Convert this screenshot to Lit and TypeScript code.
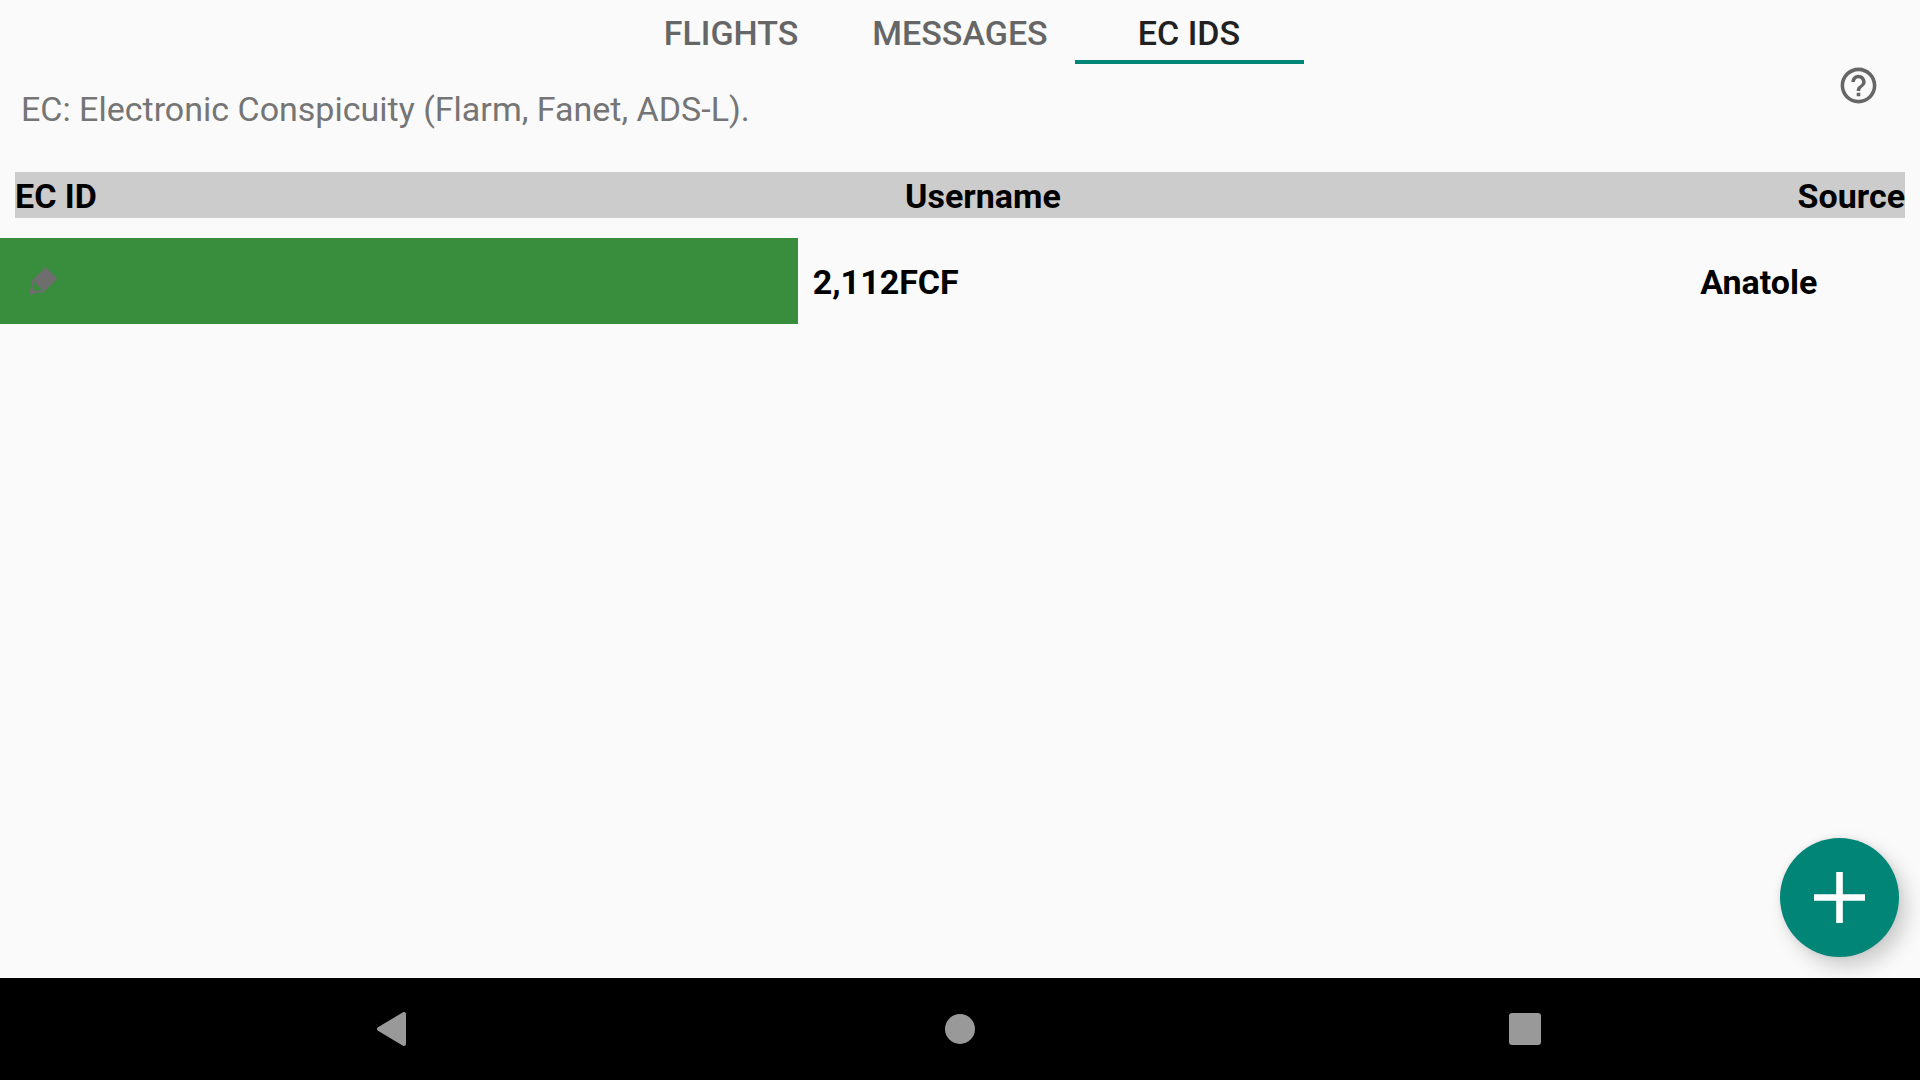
import { LitElement, html, css } from "lit";
import { customElement, state } from "lit/decorators.js";

interface EcEntry {
  id: string;
  username: string;
}

@customElement("app-root")
export class AppRoot extends LitElement {
  static styles = css`
    :host {
      display: flex;
      flex-direction: column;
      min-height: 100vh;
      background: #fafafa;
      color: #000;
      font-family: Roboto, "Liberation Sans", sans-serif;
      font-size: 34px;
      line-height: 40px;
    }
    button {
      border: 0;
      padding: 0;
      background: none;
      font: inherit;
      color: inherit;
    }
    svg {
      display: block;
    }
    .tabs {
      display: flex;
      justify-content: center;
    }
    .tab {
      width: 229px;
      height: 64px;
      padding-top: 6px;
      border-bottom: 4px solid transparent;
      box-sizing: border-box;
      font-weight: 500;
      color: #666;
    }
    .tab.active {
      color: #212121;
      border-color: #008577;
    }
    .intro {
      display: flex;
      justify-content: space-between;
      height: 108px;
      padding: 0 40px 0 21px;
      box-sizing: border-box;
    }
    .intro p {
      margin: 0;
      padding-top: 25px;
      color: #757575;
    }
    .help {
      align-self: flex-start;
      color: #666;
    }
    .list,
    .list thead,
    .list tbody {
      display: block;
    }
    .list tr {
      display: grid;
      align-items: center;
      white-space: nowrap;
    }
    .list th,
    .list td {
      padding: 2px 0 0;
      font-weight: 700;
      text-align: left;
    }
    .list thead tr {
      grid-template-columns: 89fr 89fr 11fr;
      height: 46px;
      margin: 0 15px 20px;
      background: #ccc;
    }
    .list th.end {
      text-align: right;
    }
    .list tbody tr {
      grid-template-columns: 831fr 940fr 229fr;
      height: 86px;
    }
    .list td.mark {
      display: flex;
      align-items: center;
      align-self: stretch;
      padding: 0 0 0 28px;
      background: #388e3c;
      color: #6e6e6e;
    }
    .list td.id {
      padding-left: 15px;
    }
    .spacer {
      flex: 1;
    }
    .actions {
      display: flex;
      justify-content: flex-end;
      padding: 0 21px 21px 0;
    }
    .fab {
      display: grid;
      place-items: center;
      width: 119px;
      height: 119px;
      border-radius: 50%;
      background: #008577;
      color: #fff;
      box-shadow: 8px 10px 20px rgba(0, 0, 0, 0.18), 0 0 6px rgba(0, 0, 0, 0.08);
    }
    .system {
      position: relative;
      display: grid;
      grid-template-columns: 1fr auto 1fr;
      align-items: center;
      justify-items: center;
      height: 102px;
      background: #000;
      color: #999;
    }
    .system .back {
      justify-self: end;
      margin-right: 538px;
    }
    .system .recent {
      justify-self: start;
      margin-left: 534px;
    }
  `;

  @state() private tab = "EC IDS";

  private tabs = ["FLIGHTS", "MESSAGES", "EC IDS"];
  private entries: EcEntry[] = [{ id: "2,112FCF", username: "Anatole" }];

  render() {
    return html`
      <nav class="tabs" role="tablist">
        ${this.tabs.map(
          (name) => html`<button
            class="tab ${name === this.tab ? "active" : ""}"
            role="tab"
            aria-selected=${name === this.tab}
            @click=${() => (this.tab = name)}
          >${name}</button>`
        )}
      </nav>
      <section class="intro">
        <p>EC: Electronic Conspicuity (Flarm, Fanet, ADS-L).</p>
        <button class="help" aria-label="Help">
          <svg width="43" height="43" viewBox="0 0 24 24" fill="currentColor">
            <path d="M11 18h2v-2h-2v2zm1-16C6.480 2 2 6.480 2 12s4.480 10 10 10 10-4.480 10-10S17.520 2 12 2zm0 18c-4.410 0-8-3.590-8-8s3.590-8 8-8 8 3.590 8 8-3.590 8-8 8zm0-14c-2.210 0-4 1.790-4 4h2c0-1.100.9-2 2-2s2 .9 2 2c0 2-3 1.750-3 5h2c0-2.250 3-2.500 3-5 0-2.210-1.790-4-4-4z" />
          </svg>
        </button>
      </section>
      <table class="list">
        <thead>
          <tr>
            <th scope="col">EC ID</th>
            <th scope="col">Username</th>
            <th scope="col" class="end">Source</th>
          </tr>
        </thead>
        <tbody>
          ${this.entries.map(
            (entry) => html`<tr>
              <td class="mark">
                <button aria-label="Edit">
                  <svg width="30" height="30" viewBox="0 0 30 30" fill="currentColor" fill-rule="evenodd">
                    <path d="M17.700 1L29.400 12.400L16 25.700L1.200 28.800L4.300 14.300ZM5.800 15.800L4.600 21.500Q5.500 25 9 25L14.300 23.500Z" />
                  </svg>
                </button>
              </td>
              <td class="id">${entry.id}</td>
              <td>${entry.username}</td>
            </tr>`
          )}
        </tbody>
      </table>
      <div class="spacer"></div>
      <div class="actions">
        <button class="fab" aria-label="Add EC ID">
          <svg width="51" height="51" viewBox="0 0 51 51" fill="currentColor">
            <path d="M22.200 0h6.600v22.200h22.200v6.600h-22.200v22.200h-6.600v-22.200h-22.200v-6.600h22.200z" />
          </svg>
        </button>
      </div>
      <footer class="system">
        <button class="back" aria-label="Back">
          <svg width="32" height="36" viewBox="0 0 32 36" fill="currentColor" stroke="currentColor" stroke-width="4" stroke-linejoin="round">
            <path d="M4 18L29 3V33Z" />
          </svg>
        </button>
        <button aria-label="Home">
          <svg width="30" height="30" viewBox="0 0 30 30" fill="currentColor">
            <circle cx="15" cy="15" r="15" />
          </svg>
        </button>
        <button class="recent" aria-label="Recent apps">
          <svg width="32" height="32" viewBox="0 0 32 32" fill="currentColor">
            <rect width="32" height="32" rx="3" />
          </svg>
        </button>
      </footer>
    `;
  }
}
